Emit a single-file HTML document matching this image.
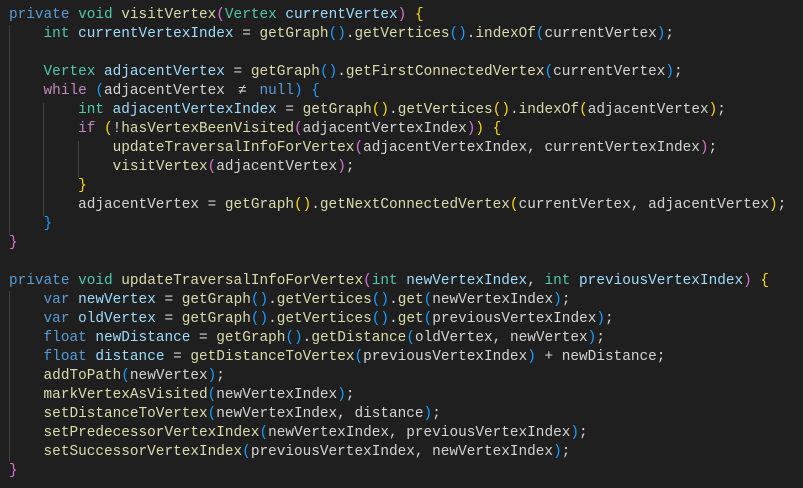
<!DOCTYPE html>
<html><head><meta charset="utf-8"><style>
html,body{margin:0;padding:0;background:#1f1f1f;width:803px;height:488px;overflow:hidden}
pre{margin:0;position:absolute;left:9px;top:6px;font-family:"Liberation Mono",monospace;font-size:14.4px;line-height:19px;color:#d4d4d4}
.k{color:#569cd6}.t{color:#4ec9b0}.c{color:#c586c0}.f{color:#dcdcaa}.v{color:#9cdcfe}.u{color:#d4d4d4}
.o{color:#da70d6}.b{color:#179fff}.g{color:#ffd700}
.ne{display:inline-block;width:2ch;text-align:center}
.guide{position:absolute;width:1px;background:#404040}
</style></head><body>
<div class="guide" style="left:9px;top:25px;height:210px"></div>
<div class="guide" style="left:43px;top:103px;height:113px"></div>
<div class="guide" style="left:78px;top:141px;height:37px"></div>
<div class="guide" style="left:9px;top:291px;height:171px"></div>
<pre><span class="k">private</span> <span class="t">void</span> <span class="f">visitVertex</span><span class="o">(</span><span class="t">Vertex</span> <span class="v">currentVertex</span><span class="o">)</span> <span class="g">{</span>
    <span class="t">int</span> <span class="v">currentVertexIndex</span> = <span class="f">getGraph</span><span class="b">()</span>.<span class="f">getVertices</span><span class="b">()</span>.<span class="f">indexOf</span><span class="b">(</span>currentVertex<span class="b">)</span>;

    <span class="t">Vertex</span> <span class="v">adjacentVertex</span> = <span class="f">getGraph</span><span class="b">()</span>.<span class="f">getFirstConnectedVertex</span><span class="b">(</span>currentVertex<span class="b">)</span>;
    <span class="c">while</span> <span class="b">(</span>adjacentVertex <span class="ne">≠</span> <span class="k">null</span><span class="b">)</span> <span class="b">{</span>
        <span class="t">int</span> <span class="v">adjacentVertexIndex</span> = <span class="f">getGraph</span><span class="g">()</span>.<span class="f">getVertices</span><span class="g">()</span>.<span class="f">indexOf</span><span class="g">(</span>adjacentVertex<span class="g">)</span>;
        <span class="c">if</span> <span class="g">(</span>!<span class="f">hasVertexBeenVisited</span><span class="o">(</span>adjacentVertexIndex<span class="o">)</span><span class="g">)</span> <span class="g">{</span>
            <span class="f">updateTraversalInfoForVertex</span><span class="o">(</span>adjacentVertexIndex, currentVertexIndex<span class="o">)</span>;
            <span class="f">visitVertex</span><span class="o">(</span>adjacentVertex<span class="o">)</span>;
        <span class="g">}</span>
        adjacentVertex = <span class="f">getGraph</span><span class="g">()</span>.<span class="f">getNextConnectedVertex</span><span class="g">(</span>currentVertex, adjacentVertex<span class="g">)</span>;
    <span class="b">}</span>
<span class="o">}</span>

<span class="k">private</span> <span class="t">void</span> <span class="f">updateTraversalInfoForVertex</span><span class="o">(</span><span class="t">int</span> <span class="v">newVertexIndex</span>, <span class="t">int</span> <span class="v">previousVertexIndex</span><span class="o">)</span> <span class="g">{</span>
    <span class="k">var</span> <span class="v">newVertex</span> = <span class="f">getGraph</span><span class="b">()</span>.<span class="f">getVertices</span><span class="b">()</span>.<span class="f">get</span><span class="b">(</span>newVertexIndex<span class="b">)</span>;
    <span class="k">var</span> <span class="v">oldVertex</span> = <span class="f">getGraph</span><span class="b">()</span>.<span class="f">getVertices</span><span class="b">()</span>.<span class="f">get</span><span class="b">(</span>previousVertexIndex<span class="b">)</span>;
    <span class="k">float</span> <span class="v">newDistance</span> = <span class="f">getGraph</span><span class="b">()</span>.<span class="f">getDistance</span><span class="b">(</span>oldVertex, newVertex<span class="b">)</span>;
    <span class="k">float</span> <span class="v">distance</span> = <span class="f">getDistanceToVertex</span><span class="b">(</span>previousVertexIndex<span class="b">)</span> + newDistance;
    <span class="f">addToPath</span><span class="b">(</span>newVertex<span class="b">)</span>;
    <span class="f">markVertexAsVisited</span><span class="b">(</span>newVertexIndex<span class="b">)</span>;
    <span class="f">setDistanceToVertex</span><span class="b">(</span>newVertexIndex, distance<span class="b">)</span>;
    <span class="f">setPredecessorVertexIndex</span><span class="b">(</span>newVertexIndex, previousVertexIndex<span class="b">)</span>;
    <span class="f">setSuccessorVertexIndex</span><span class="b">(</span>previousVertexIndex, newVertexIndex<span class="b">)</span>;
<span class="o">}</span></pre>
</body></html>
